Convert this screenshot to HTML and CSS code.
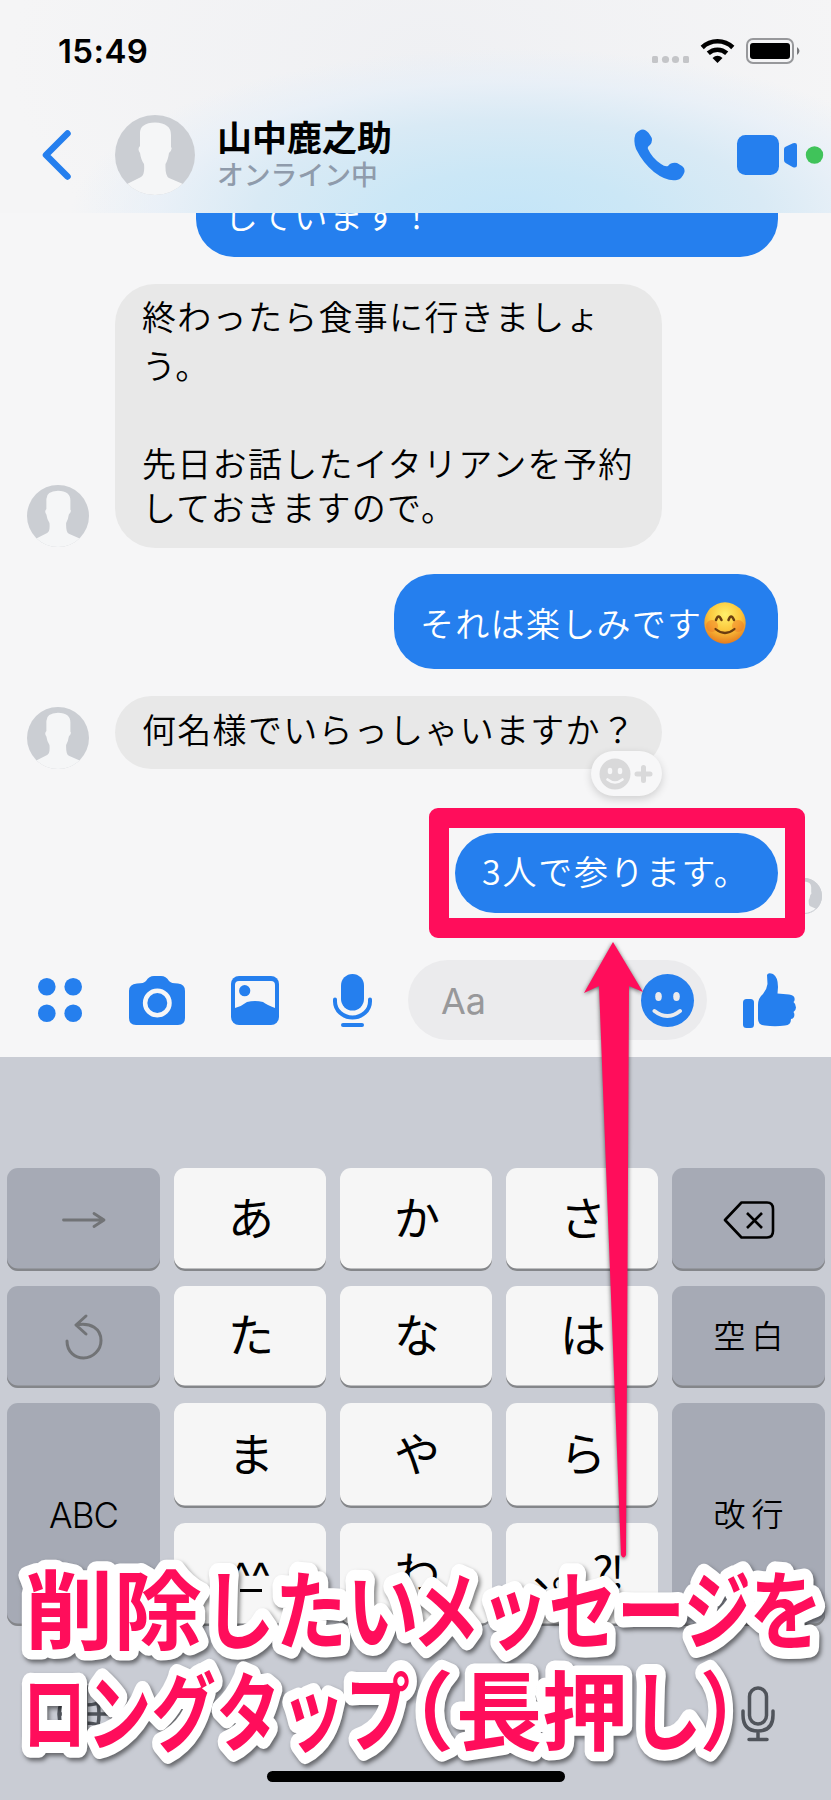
FILE: index.html
```html
<!DOCTYPE html>
<html lang="ja">
<head>
<meta charset="utf-8">
<title>山中鹿之助</title>
<link rel="stylesheet" href="styles.css">
</head>
<body>
<svg class="defs" width="0" height="0">
  <defs>
    <clipPath id="round"><circle cx="40" cy="40" r="40"/></clipPath>
    <radialGradient id="face" cx=".5" cy=".3" r=".7"><stop offset="0" stop-color="#fff06a"/><stop offset=".55" stop-color="#fcc63c"/><stop offset="1" stop-color="#e67c1e"/></radialGradient>
  </defs>
  <symbol id="avatar" viewBox="0 0 80 80">
    <g clip-path="url(#round)">
      <rect width="80" height="80" fill="#cbced3"/>
      <path fill="#f5f6f7" d="M25 31V18Q25 8 40 7.500Q56 8 56 20V32Q58 34 54 38Q53 45 50.500 49Q50 61 54 63L68 69L80 69V82H0V69L12 69L26 62Q30 60 29 49Q26 45 25 38Q22 34 25 31Z"/>
    </g>
  </symbol>
</svg>
<div class="phone">
  <header class="top">
    <div class="status">
      <span class="time">15:49</span>
      <svg class="status-icons" width="150" height="26" viewBox="0 0 150 26">
        <g fill="#c4c5c8"><rect x="0" y="18" width="6" height="7" rx="1.500"/><circle cx="13.500" cy="21.500" r="3.600"/><circle cx="23.500" cy="21.500" r="3.600"/><rect x="31" y="18" width="6" height="7" rx="1.500"/></g>
        <path fill="none" stroke="#000" stroke-width="4.600" d="M50.200 9.500a22 22 0 0 1 30.600 0M56.300 15.300a13.500 13.500 0 0 1 18.400 0"/>
        <path d="M60.500 20q5-4.500 10 0l-5 5z"/>
        <rect x="95" y="1" width="46" height="24" rx="6" fill="none" stroke="#97989b" stroke-width="2"/>
        <rect x="98" y="5" width="40" height="16" rx="3"/><path fill="#77787b" d="M145 9q5 4 0 8z"/>
      </svg>
    </div>
    <div class="contact">
      <svg class="back" width="30" height="50" viewBox="0 0 30 50"><path fill="none" stroke="#257fee" stroke-width="6.500" stroke-linecap="round" stroke-linejoin="round" d="M25.500 3.500L4 25L25.500 46.500"/></svg>
      <svg class="avatar-big" width="80" height="80"><use href="#avatar"/></svg>
      <div class="who"><b class="name">山中鹿之助</b><span class="online">オンライン中</span></div>
      <svg class="call" width="51" height="52" viewBox="0 0 51 52"><path fill="#257fee" d="M9 .5Q5 .5 1.500 5Q-1 12 2 20Q9 34 20 43Q33 53 43 51Q48 50 50.500 43Q51 39 48 37L43 34Q37 33 34 37Q31 38 27 35Q18 29 14 20Q13 18 16 16Q20 11 16 6Q13 1 9 .5Z"/></svg>
      <svg class="video" width="87" height="40" viewBox="0 0 87 40"><rect width="42" height="40" rx="8.500" fill="#257fee"/><path fill="#257fee" d="M47 14q0-2 2-2.500l7-3.300q4-1 4 2v20q0 3-4 2l-7-4q-2-1-2-3z"/><circle cx="77.500" cy="20" r="8.700" fill="#40c35a"/></svg>
    </div>
  </header>

  <main class="chat">
    <div class="row sent"><p class="bubble blue clipped">しています！</p></div>
    <div class="row got long-row">
      <svg class="avatar" width="62" height="62"><use href="#avatar"/></svg>
      <p class="bubble gray long"><span>終わったら食事に行きましょ</span><span>う。</span><span>&nbsp;</span><span>先日お話したイタリアンを予約</span><span class="tight">しておきますので。</span></p>
    </div>
    <div class="row sent fun-row">
      <p class="bubble blue fun">それは楽しみです<svg class="emoji" width="42" height="42" viewBox="0 0 42 42"><circle cx="21" cy="21" r="20.700" fill="url(#face)"/><circle cx="8" cy="24" r="6" fill="#ee7325" opacity=".45"/><circle cx="34" cy="24" r="6" fill="#ee7325" opacity=".45"/><g fill="none" stroke="#6b3d10" stroke-linecap="round"><path stroke-width="2.500" d="M12 18q2.500-7 5.500 0M24.500 18q2.500-7 5.500 0"/><path stroke-width="2.200" d="M11.500 27q9.500 8 19 0"/></g></svg></p>
    </div>
    <div class="row got ask-row">
      <svg class="avatar" width="62" height="62"><use href="#avatar"/></svg>
      <p class="bubble gray ask">何名様でいらっしゃいますか？
        <span class="react"><svg width="54" height="32" viewBox="0 0 54 32"><circle cx="16" cy="16" r="15.500" fill="#d9d9da"/><g fill="#f7f7f8"><ellipse cx="11" cy="13" rx="2.300" ry="3.200"/><ellipse cx="21" cy="13" rx="2.300" ry="3.200"/></g><path fill="none" stroke="#f7f7f8" stroke-width="2.600" stroke-linecap="round" d="M8.500 21.500q7.500 6 15 0"/><path stroke="#d9d9da" stroke-width="5" stroke-linecap="round" d="M38 16h13M44.500 9.500v13"/></svg></span>
      </p>
    </div>
    <div class="row sent last-row">
      <p class="bubble blue answer">3人で参ります。<svg class="seen" width="36" height="36"><use href="#avatar"/><circle cx="18" cy="18" r="17.500" fill="none" stroke="#cbced3"/></svg><span class="frame"></span></p>
    </div>
  </main>

  <div class="composer">
    <svg width="44" height="44" viewBox="0 0 44 44" fill="#257fee"><circle cx="8.800" cy="8.800" r="8.800"/><circle cx="35.200" cy="8.800" r="8.800"/><circle cx="8.800" cy="35.200" r="8.800"/><circle cx="35.200" cy="35.200" r="8.800"/></svg>
    <svg class="camera" width="56" height="49" viewBox="0 0 56 49"><path fill="#257fee" d="M8 7.500Q15 7.500 17 5Q20 0 25 0H32Q37 0 40 5Q42 7.500 49 7.500Q56 8 56 15V42Q56 49 49 49H7Q0 49 0 42V15Q0 8 8 7.500Z"/><circle cx="28.300" cy="27" r="12.200" fill="#257fee" stroke="#f6f6f7" stroke-width="4.500"/></svg>
    <svg class="photo" width="48" height="49" viewBox="0 0 48 49"><rect width="48" height="49" rx="8" fill="#257fee"/><path fill="#f6f6f7" d="M4 9q0-4 4-4h32q4 0 4 4v23q-8-3-12-6q-8-2-16 0q-5 4-12 6z"/><circle cx="13.700" cy="14.700" r="5.600" fill="#257fee"/></svg>
    <svg class="voice" width="39" height="53" viewBox="0 0 39 53"><rect x="8" width="23" height="36.500" rx="11.500" fill="#257fee"/><g fill="none" stroke="#257fee" stroke-width="4" stroke-linecap="round"><path d="M2 25.500v2a17.500 16 0 0 0 35 0v-2"/><path d="M10 51h19"/></g></svg>
    <div class="field"><span>Aa</span><svg width="53" height="53" viewBox="0 0 53 53"><circle cx="26.500" cy="26.500" r="26.500" fill="#257fee"/><g fill="#ebebed"><ellipse cx="17.500" cy="22.500" rx="3.300" ry="4.500"/><ellipse cx="35.500" cy="22.500" rx="3.300" ry="4.500"/></g><path fill="none" stroke="#ebebed" stroke-width="4" stroke-linecap="round" d="M13.500 37q13 10 25.500 0"/></svg></div>
    <svg class="like" width="53" height="55" viewBox="0 0 53 55" fill="#257fee"><rect y="26" width="11" height="29" rx="3.500"/><path d="M24 2Q25-1 30 1Q35 4 35 14L34.500 20.500L46 21.500Q51 22 51.500 25Q52 28 50.500 29Q53 31 53 34.500Q53 37 50.500 39Q52 41 51 44Q50 46 48 46Q48 52 42 52.500Q32 54 22 52.500Q15 52 15 46V32Q15 25 20 21Q24 16 24.500 11Z"/></svg>
  </div>

  <section class="keyboard">
    <div class="keys">
      <div class="key dark"><svg width="44" height="18" viewBox="0 0 44 18"><path fill="none" stroke="#717376" stroke-width="2.800" stroke-linecap="round" stroke-linejoin="round" d="M1.500 9H42L32 2.500M42 9L32 15.500"/></svg></div>
      <div class="key">あ</div><div class="key">か</div><div class="key">さ</div>
      <div class="key dark"><svg width="52" height="38" viewBox="0 0 52 38"><path fill="none" stroke="#000" stroke-width="2.600" stroke-linejoin="round" d="M18.500 1.500H44Q50 1.500 50 8V30Q50 36.500 44 36.500H18.500L2 19ZM24 12l15 15M39 12L24 27"/></svg></div>
      <div class="key dark"><svg width="38" height="46" viewBox="0 0 38 46"><path fill="none" stroke="#717376" stroke-width="3" stroke-linecap="round" stroke-linejoin="round" d="M2 27C2 38 10 44 18.500 44C28 44 36 36 36 26.500C36 15 26 8 11 11M21 2L11 11L21 20"/></svg></div>
      <div class="key">た</div><div class="key">な</div><div class="key">は</div>
      <div class="key dark label">空白</div>
      <div class="key dark tall abc">ABC</div>
      <div class="key">ま</div><div class="key">や</div><div class="key">ら</div>
      <div class="key dark tall label">改行</div>
      <div class="key carets"><span>^^</span></div><div class="key">わ</div><div class="key punct">、。?!</div>
    </div>
    <div class="dock">
      <svg width="60" height="60" viewBox="0 0 60 60"><g fill="none" stroke="#50545b" stroke-width="3.500"><circle cx="30" cy="30" r="27"/><ellipse cx="30" cy="30" rx="13" ry="27"/><path d="M30 3v54M3 30h54M8 15q22 12 44 0M8 45q22-12 44 0"/></g></svg>
      <svg width="34" height="56" viewBox="0 0 34 56"><g fill="none" stroke="#50545b" stroke-width="3.500" stroke-linecap="round"><rect x="8.500" y="2" width="17" height="36" rx="8.500"/><path d="M2 25v4q0 16 15 16t15-16v-4M17 45v8M8 53.500h18"/></g></svg>
    </div>
    <div class="home"></div>
  </section>

  <svg class="notes" width="831" height="1800" viewBox="0 0 831 1800">
    <path class="pointer" d="M613 942L643 992L629 986L626 1555Q623.500 1560 621 1555L599 986L584 993Z"/>
    <g class="caption">
      <text x="25" y="1643" textLength="177" lengthAdjust="spacingAndGlyphs">削除</text>
      <text x="203" y="1643" class="kana" textLength="216" lengthAdjust="spacingAndGlyphs">したい</text>
      <text x="412" y="1643" class="kana" textLength="340" lengthAdjust="spacingAndGlyphs">メッセージ</text>
      <text x="749" y="1643" class="kana" textLength="74" lengthAdjust="spacingAndGlyphs">を</text>
      <text x="22" y="1745" class="kana" textLength="388" lengthAdjust="spacingAndGlyphs">ロングタップ</text>
      <text x="368" y="1744">（</text>
      <text x="456" y="1744" textLength="172" lengthAdjust="spacingAndGlyphs">長押</text>
      <text x="630" y="1744" class="kana" textLength="72" lengthAdjust="spacingAndGlyphs">し</text>
      <text x="700" y="1744" textLength="74" lengthAdjust="spacingAndGlyphs">）</text>
    </g>
  </svg>
</div>
</body>
</html>
```
FILE: styles.css
```css
* { box-sizing: border-box; }
body { margin: 0; }
svg { display: block; flex: none; overflow: visible; }
.defs { position: absolute; }
.phone {
  position: relative;
  width: 831px;
  height: 1800px;
  overflow: hidden;
  background: #f6f6f7;
  color: #000;
  font-family: "Noto Sans CJK JP", sans-serif;
}
.top {
  height: 213px;
  background:
    radial-gradient(ellipse 440px 170px at 510px 218px, #c4e5f8 0%, #cbe7f6 28%, #d9eaf5 58%, rgba(230, 239, 248, .75) 80%, rgba(240, 241, 244, 0) 100%),
    radial-gradient(ellipse 420px 260px at 430px 60px, #eff0f3 0%, #f5f5f6 100%);
}
.status {
  height: 98px;
  display: flex;
  justify-content: space-between;
  padding: 30px 29px 0 58px;
}
.time { font: 600 33px/42px Inter, sans-serif; letter-spacing: .4px; }
.status-icons { margin-top: 8px; }
.contact { display: flex; align-items: center; height: 114px; padding-left: 42px; }
.avatar-big { margin-left: 43px; }
.who { width: 414px; padding: 0 0 4px 22px; display: flex; flex-direction: column; }
.name { font-size: 35px; line-height: 41px; font-weight: 700; }
.online { font-size: 26.800px; line-height: 35px; font-weight: 500; color: #8f9bab; }
.call { margin-left: 25px; }
.video { margin-left: 52px; }

.chat { height: 734px; }
.row { display: flex; align-items: flex-end; }
.sent { justify-content: flex-end; padding-right: 53px; }
.got { padding-left: 27px; gap: 26px; }
.long-row .avatar { margin-bottom: 1px; }
.bubble {
  margin: 0;
  font-size: 34px;
  letter-spacing: 1.300px;
  font-weight: 350;
  white-space: nowrap;
}
.blue { background: #257fee; color: #fff; }
.gray { background: #e8e8e8; width: 547px; padding-left: 27px; }
.clipped {
  width: 582px;
  height: 44px;
  padding-left: 28px;
  line-height: 4px;
  border-radius: 0 0 38px 38px;
  overflow: hidden;
}
.long-row { margin-top: 27px; }
.long { height: 264px; padding-top: 7px; border-radius: 40px; }
.long span { display: block; line-height: 49px; }
.long .tight { line-height: 39px; }
.fun-row { margin-top: 26px; }
.fun {
  display: flex;
  align-items: center;
  width: 384px;
  height: 95px;
  padding: 2px 0 0 26px;
  border-radius: 40px;
}
.emoji { margin-left: 2px; }
.ask-row { margin-top: 27px; }
.ask { position: relative; height: 73px; line-height: 66px; border-radius: 37px; }
.react {
  position: absolute;
  right: 0;
  top: 55px;
  width: 71px;
  height: 45px;
  padding: 7px 0 0 8px;
  border-radius: 23px;
  background: #f7f7f8;
  box-shadow: 0 3px 8px rgba(0, 0, 0, .16);
}
.last-row { margin-top: 64px; }
.answer {
  position: relative;
  width: 323px;
  height: 80px;
  padding-left: 27px;
  line-height: 76px;
  letter-spacing: 1.800px;
  border-radius: 40px;
}
.seen { position: absolute; left: 331px; top: 45px; }
.frame {
  position: absolute;
  left: -26px;
  top: -25px;
  width: 376px;
  height: 130px;
  border: 20px solid #ff0d5b;
  border-radius: 9px;
}

.composer { display: flex; align-items: center; height: 110px; padding: 0 0 4px 38px; }
.camera { margin-left: 47px; }
.photo { margin-left: 46px; }
.voice { margin-left: 54px; }
.field {
  display: flex;
  align-items: center;
  justify-content: space-between;
  width: 299px;
  height: 80px;
  margin-left: 36px;
  padding: 0 13px 0 33px;
  border-radius: 40px;
  background: #ebebed;
  color: #98989a;
  font: 36px Inter, sans-serif;
}
.field span { padding-top: 2px; }
.like { margin-left: 36px; }

.keyboard { height: 743px; background: #c9ccd4; padding: 111px 6px 0 7px; }
.keys {
  display: grid;
  grid-template-columns: 153px 152px 152px 152px 153px;
  grid-template-rows: 103px 102px 105px 103px;
  gap: 15px 14px;
}
.key {
  display: flex;
  align-items: center;
  justify-content: center;
  border-radius: 11px;
  background: #f6f6f6;
  box-shadow: inset 0 -2.500px 0 #84868a;
  font-size: 46px;
  line-height: 1.450;
  padding: 0 0 9px 2px;
}
.dark { background: #a6aab5; padding: 0; }
.tall { grid-row: span 2; }
.label { font-size: 32px; letter-spacing: 6px; padding: 0 0 5px 6px; font-weight: 350; }
.abc { font: 35px Inter, sans-serif; letter-spacing: -1px; font-weight: 300; }
.carets { padding-bottom: 2px; }
.carets span {
  font: 42px/44px Inter, sans-serif;
  height: 37px;
  background: linear-gradient(#000, #000) 50% 100% / 22px 3px no-repeat;
}
.punct { font-size: 44px; letter-spacing: -3px; padding-right: 12px; }
.dock { display: flex; justify-content: space-between; align-items: center; height: 62px; margin-top: 57px; padding: 0 50px 0 49px; }
.home { width: 298px; height: 11px; margin: 26px 0 0 260px; border-radius: 6px; background: #000; }

.notes { position: absolute; left: 0; top: 0; }
.pointer { fill: #ff0d5b; filter: drop-shadow(0 1px 2px rgba(0, 0, 0, .6)); }
.caption {
  font-size: 86px;
  font-weight: 700;
  fill: #ff0d5b;
  stroke: #fff;
  stroke-width: 19px;
  stroke-linejoin: round;
  paint-order: stroke;
  filter: drop-shadow(2px 3px 2px rgba(0, 0, 0, .5));
}
.caption .kana { stroke-width: 22px; }
```
